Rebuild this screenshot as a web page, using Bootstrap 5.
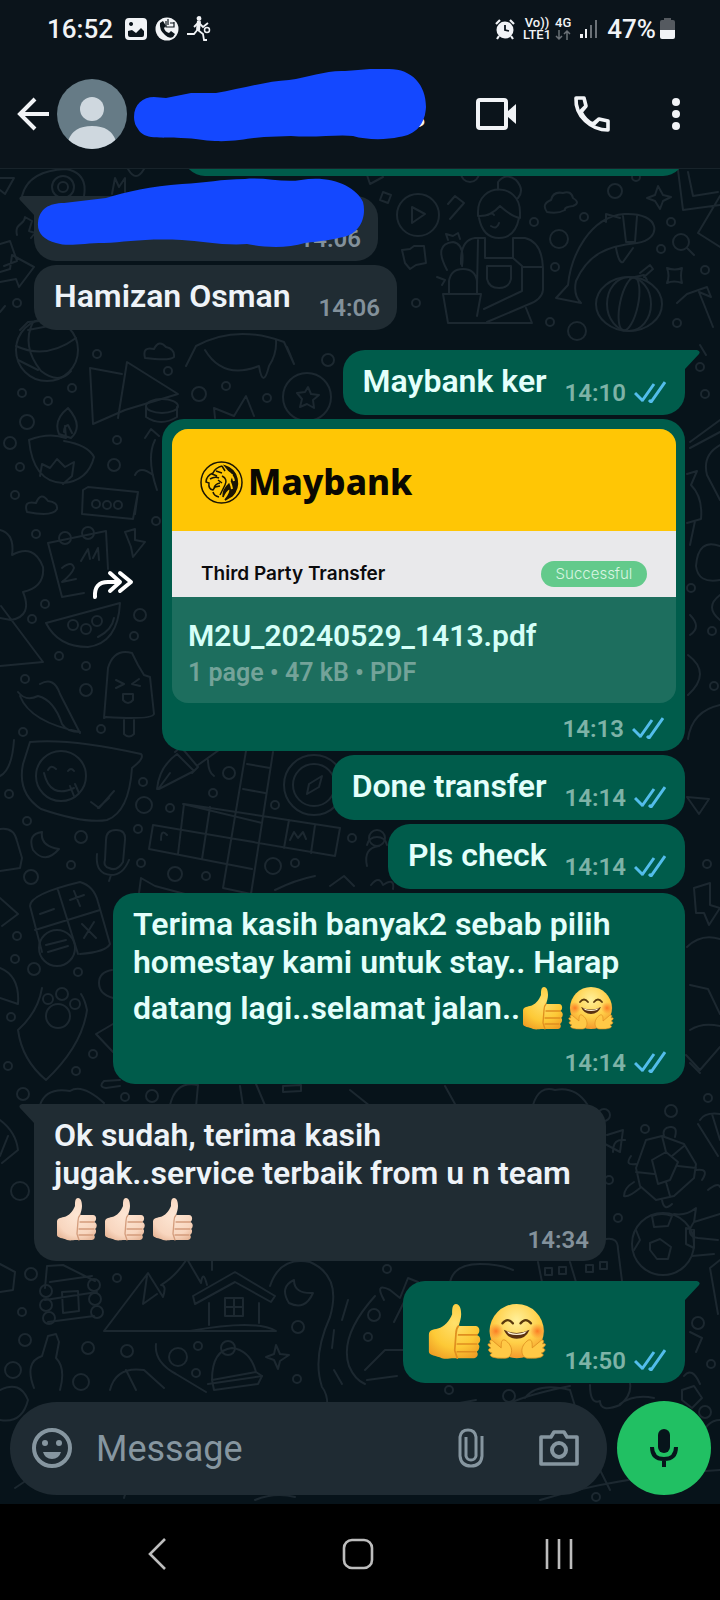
<!DOCTYPE html>
<html lang="ms">
<head>
<meta charset="utf-8">
<meta name="viewport" content="width=device-width, initial-scale=1">
<title>Chat</title>
<link href="https://cdn.jsdelivr.net/npm/bootstrap@5.3.0/dist/css/bootstrap.min.css" rel="stylesheet">
<style>
  body { font-family: Roboto, "Liberation Sans", sans-serif; background: #000; color: #e9edef; }
  svg { display: block; flex: none; }
  .plain { border: 0; background: none; padding: 0; color: inherit; }
  .top-area { background: #0b141b; border-bottom: 1px solid #18232a; color: #f1f3f6; }
  .status-bar { height: 58px; padding: 0 45px 0 47px; font-weight: 500; }
  .status-time { font-size: 26px; line-height: 32px; }
  .status-small { font-size: 13px; line-height: 12px; }
  .app-bar { height: 110px; padding: 2px 32px 0 16px; }
  .app-actions { gap: 54px; }
  .contact-name { height: 70px; margin-left: 6px; font-size: 32px; font-weight: 700; }
  .name-end { margin-left: 276px; padding-top: 4px; }
  .scribble { position: absolute; fill: #1448ff; }
  .scribble-name { left: 0; top: -10px; }
  .scribble-msg { left: 3px; top: -19px; }
  .chat { background: #07131a; }
  .wallpaper { position: absolute; inset: 0; width: 100%; height: 100%; fill: none; stroke: #1c2830; stroke-width: 2; stroke-linejoin: round; stroke-linecap: round; }
  .thread { padding: 0 35px 0 34px; gap: 4px; }
  .turn { margin-top: 16px; }
  .bubble { position: relative; border-radius: 22px; padding: 12px 17px 8px 20px; width: fit-content; max-width: 572px; }
  .bubble-out { background: #005c4b; color: #e4fffb; margin-left: auto; padding-right: 19px; }
  .bubble-in { background: #202c33; color: #eef3f8; }
  .tail-out { border-top-right-radius: 0; }
  .tail-in { border-top-left-radius: 0; }
  .tail { position: absolute; top: 0; }
  .tail-out .tail { left: 100%; fill: #005c4b; }
  .tail-in .tail { right: 100%; fill: #202c33; }
  .msg { font-size: 32px; line-height: 38px; font-weight: 600; margin: 0 0 7px; }
  .msg-gap { margin-right: 18px; }
  .msg-gap-in { margin-right: 28px; }
  .stamp { font-size: 24px; line-height: 24px; font-weight: 600; white-space: nowrap; margin-bottom: 2px; }
  .bubble-in .stamp { color: #83919b; }
  .bubble-out .stamp { color: #7eb3a7; }
  .ticks { fill: none; stroke: #53bdeb; stroke-width: 3; margin-left: 8px; }
  .emoji { display: inline-block; width: 48px; height: 50px; vertical-align: -12px; }
  .emoji-big { width: 62px; height: 65px; margin-top: 3px; }
  .emoji-row { margin: 0 16px 14px 2px; }
  .long-note { padding-bottom: 7px; }
  .stacked { padding-bottom: 7px; }
  .stacked > :not(.tail) { grid-area: 1 / 1; }
  .clipped { height: 7px; overflow: hidden; }
  .clipped .bubble { width: 502px; height: 65px; }
  .masked { width: 344px; height: 65px; }
  .doc-bubble { width: 523px; padding: 10px 9px 6px 10px; }
  .doc-card { border-radius: 16px; overflow: hidden; background: #1d6e5e; margin-bottom: 14px; }
  .doc-brand { background: #ffc605; color: #0a0802; height: 102px; padding: 4px 0 0 28px; gap: 5px; font: 800 35px/40px "Noto Sans", "Open Sans", sans-serif; }
  .doc-title { background: #e9e9eb; color: #0b0b0d; height: 66px; padding: 20px 29px 0; font: 600 19px/24px Inter, sans-serif; }
  .doc-state { background: #63ca8b; color: #d9f5e2; border-radius: 13px; width: 106px; font-size: 15px; line-height: 26px; font-weight: 300; }
  .doc-file { height: 106px; padding: 20px 16px 0; }
  .doc-name { font-size: 30px; line-height: 38px; font-weight: 600; color: #d5fff8; }
  .doc-meta { font-size: 25px; line-height: 35px; font-weight: 600; color: #74a399; }
  .forward { margin-right: 28px; color: #fff; }
  .composer { padding: 17px 9px 9px 10px; gap: 10px; }
  .entry { background: #1f2b33; border-radius: 47px; height: 93px; min-width: 0; padding: 0 28px 0 22px; color: #8696a0; }
  .entry input { background: none; border: 0; outline: 0; width: 0; min-width: 0; font-size: 36px; line-height: 42px; color: #e9edef; padding: 2px 0 0 24px; }
  .entry input::placeholder { color: #8696a0; opacity: 1; }
  .attach { margin-right: 55px; }
  .mic { width: 94px; height: 94px; background: #21c063; color: #07141b; }
  .system-nav { height: 96px; padding: 4px 60px 0 56px; color: #bdbdbd; background: #000; }
</style>
</head>
<body class="d-flex flex-column min-vh-100">

<!-- Shared symbols: emoji, ticks and bubble tails -->
<svg width="0" height="0" class="position-absolute" aria-hidden="true">
  <defs>
    <radialGradient id="gold" cx=".5" cy=".35" r=".75"><stop offset="0" stop-color="#ffe06b"/><stop offset=".6" stop-color="#fdc936"/><stop offset="1" stop-color="#ee9a22"/></radialGradient>
    <radialGradient id="pale" cx=".5" cy=".4" r=".75"><stop offset="0" stop-color="#fde6d4"/><stop offset=".65" stop-color="#f8d6bf"/><stop offset="1" stop-color="#e3ad8c"/></radialGradient>
    <radialGradient id="face" cx=".5" cy=".3" r=".7"><stop offset="0" stop-color="#fff09a"/><stop offset=".6" stop-color="#ffcf47"/><stop offset="1" stop-color="#f59a2c"/></radialGradient>
    <radialGradient id="cheek"><stop offset="0" stop-color="#fb6d1e" stop-opacity=".85"/><stop offset="1" stop-color="#fb7d2e" stop-opacity="0"/></radialGradient>
    <g id="hand">
      <path stroke="none" d="M3 30c0-4 3-4 7-5 5-1 9-6 11-11 0-4 0-8 3-8 3 0 4 4 4 8 0 3-1 6-2 9h13c4 0 4 6 1 7 4 1 3 6 1 7 2 1 1 5-1 6 2 2 0 5-2 5H23c-5 0-6 1-10 0-4-2-10-2-10-5z"/>
      <path d="M26 23c-2 2-2 4-2 6l-1 13 2 6M26 30h14M25 37h15M25 43h14" fill="none" stroke-width="1.3" stroke-linecap="round"/>
    </g>
    <symbol id="thumb" viewBox="0 0 48 50"><use href="#hand" fill="url(#gold)" stroke="#e08f1f"/></symbol>
    <symbol id="thumb-light" viewBox="0 0 48 50"><use href="#hand" fill="url(#pale)" stroke="#d39c7c"/></symbol>
    <symbol id="hug" viewBox="0 0 48 50">
      <circle cx="23" cy="27" r="21" fill="url(#face)"/>
      <circle cx="7" cy="27" r="6" fill="url(#cheek)"/><circle cx="39" cy="27" r="6" fill="url(#cheek)"/>
      <path d="M12 21q4-5 8 0M26 21q4-5 8 0" fill="none" stroke="#5a3a0c" stroke-width="1.8" stroke-linecap="round"/>
      <path d="M13 26q10 5 20 0-3 7-10 7t-10-7" fill="#5a3110"/><path d="M15 27q8 4 16 0l-2 2q-6 2-12 0z" fill="#fff3d8"/>
      <g fill="#ffc946" stroke="#db8a1e" stroke-width=".6">
        <path id="palm" d="M14 48c-5 0-7 0-10-1-2-1-2-2 0-3-3-1-4-3-1-4-3-2-3-4 0-3-2-3 0-4 2-2l6 5c0-4 0-7 3-6 3 2 5 5 5 8 0 4-2 6-5 6z"/>
        <use href="#palm" transform="matrix(-1 0 0 1 46 0)"/>
      </g>
    </symbol>
    <symbol id="ticks" viewBox="0 0 32 22"><path d="M1 12l8 8M8 20L20 3M15 19l2 2L31 1"/></symbol>
    <symbol id="tail-r" viewBox="0 0 15 24"><path d="M-1 0H12q4 1 2 4L0 19v5h-1z"/></symbol>
    <symbol id="tail-l" viewBox="0 0 15 24"><path d="M16 0H3q-4 1-2 4l14 15v5h1z"/></symbol>
  </defs>
</svg>

<header class="top-area">
  <div class="status-bar d-flex align-items-center justify-content-between">
    <div class="d-flex align-items-center">
      <span class="status-time me-2">16:52</span>
      <svg class="ms-1 me-2" width="22" height="22" viewBox="0 0 22 22" fill="#f1f3f6"><path fill-rule="evenodd" d="M4 0h14q4 0 4 4v14q0 4-4 4H4q-4 0-4-4V4q0-4 4-4M3 13v4q0 2 2 2h12q2 0 2-2v-4l-3-3-5 5-4-3zM6 4a2 2 0 1 0 .1 0z"/></svg>
      <svg class="me-2" width="24" height="24" viewBox="0 0 24 24"><circle cx="12" cy="12" r="11.500" fill="#f1f3f6"/><path d="M5 6l3-2 3 5-2 2q1 4 5 5l2-2 4 3-2 3q-4 2-8-2-6-5-5-12" fill="#0b141b"/><path d="M11 4v6h8V5M13 8V2M15 6h4" fill="none" stroke="#0b141b" stroke-width="1.200"/></svg>
      <svg width="24" height="26" viewBox="0 0 24 26" fill="none" stroke="#f1f3f6" stroke-width="1.800"><circle cx="12" cy="2.500" r="1.500" fill="#f1f3f6"/><path d="M12 5l-1 9" stroke-width="4"/><path d="M11 14l5 4 1 6h3M11 13l-4 5H0M11 7L7 11M12 7l4 4 5-4" /><circle cx="20" cy="14" r="2.500" stroke-width="1.500"/></svg>
    </div>
    <div class="d-flex align-items-center">
      <svg width="20" height="21" viewBox="0 0 20 21"><circle cx="10" cy="11" r="8.500" fill="#f1f3f6"/><path d="M10 6v5l4 1" fill="none" stroke="#0b141b" stroke-width="1.800"/><path d="M1 5l4-4M19 5l-4-4M4 17l-2 3M16 17l2 3" stroke="#f1f3f6" stroke-width="2.200"/></svg>
      <div class="status-small text-center ms-2">Vo))<br>LTE1</div>
      <div class="status-small ms-1 d-flex flex-column align-items-center"><span>4G</span>
        <svg width="16" height="12" viewBox="0 0 16 12" fill="none" stroke="#6b7177" stroke-width="1.500"><path d="M4 1v9M1 7l3 3 3-3M12 11V2M9 5l3-3 3 3"/></svg></div>
      <svg class="ms-2" width="20" height="20" viewBox="0 0 20 20" fill="#6b7177"><path fill="#f1f3f6" d="M1 15h3v4H1zM6 10h2v9H6z"/><path d="M11 6h2v13h-2zM16 1h2v18h-2z"/></svg>
      <span class="status-time ms-2">47%</span>
      <svg class="ms-1" width="15" height="22" viewBox="0 0 15 22"><path d="M4 0h7v2h2q2 0 2 2v9H0V4q0-2 2-2h2z" fill="#555a60"/><path d="M0 12h15v7q0 2-2 2H2q-2 0-2-2z" fill="#f1f3f6"/></svg>
    </div>
  </div>
  <div class="app-bar d-flex align-items-center">
    <button class="plain" type="button" aria-label="Back"><svg width="33" height="34" viewBox="0 0 33 34" fill="none" stroke="currentColor" stroke-width="4"><path d="M33 17H4M19 2L4 17l15 15"/></svg></button>
    <svg class="ms-2" width="70" height="70" viewBox="0 0 70 70"><defs><clipPath id="disc"><circle cx="35" cy="35" r="35"/></clipPath></defs><g clip-path="url(#disc)"><path fill="#667b86" d="M0 0h70v70H0z"/><circle cx="35" cy="30" r="12" fill="#cfd8df"/><path d="M11 62q5-15 24-15t24 15v8H11z" fill="#cfd8df"/></g></svg>
    <div class="contact-name flex-grow-1 position-relative d-flex align-items-center">
      <span class="name-end">s</span>
      <svg class="scribble scribble-name" width="294" height="74" viewBox="132 68 294 74" aria-hidden="true"><path d="M133 116C133 103 142 96 153 96L165 97L190 92H215C239 88 266 80 288 79C308 76 326 69 344 70C360 69 370 67 388 68C411 68 425 84 425 106C424 123 415 134 398 136C385 139 365 139 352 135C337 133 315 137 290 135L263 136C247 137 233 141 214 140C202 140 196 137 180 137C159 136 143 139 137 128Q133 123 133 116Z"/></svg>
    </div>
    <div class="app-actions d-flex align-items-center">
      <button class="plain" type="button" aria-label="Video call"><svg width="40" height="34" viewBox="0 0 40 34"><rect x="2" y="3" width="28" height="28" rx="2" fill="none" stroke="currentColor" stroke-width="4"/><path d="M31 15l9-8v20l-9-8z" fill="currentColor"/></svg></button>
      <button class="plain" type="button" aria-label="Voice call"><svg width="40" height="40" viewBox="0 0 40 40" fill="none" stroke="currentColor" stroke-width="3.600" stroke-linejoin="round"><path d="M6 4h8l2 8-5 6c3 6 7 10 12 12l6-5 9 2v9C21 36 5 22 6 4zM11 17l5-5M24 30l5-5"/></svg></button>
      <button class="plain" type="button" aria-label="More options"><svg width="24" height="34" viewBox="0 0 24 34" fill="currentColor"><circle cx="12" cy="5" r="4"/><circle cx="12" cy="17" r="4"/><circle cx="12" cy="29" r="4"/></svg></button>
    </div>
  </div>
</header>

<main class="chat position-relative flex-grow-1 d-flex flex-column overflow-hidden">
  <svg class="wallpaper" viewBox="0 169 720 1335" preserveAspectRatio="xMidYMin slice" aria-hidden="true">
    <!-- upper left -->
    <path d="M0 178l14 0-9 16-5-4M22 196c4-16 18-26 44-27q22 4 18 27M128 169q8 14 16 0M112 194l3-16 4 9 6-9 0 14M17 235c-3-12 8-10 8-18l7 4-3 10 6 2-4 5M0 244l10-3 7 20-13 5M0 272l10-3 2-14 22 12-15 20-3-8-16 3M0 312l5-6M20 330l8-8 24-2"/>
    <circle cx="63" cy="187" r="11"/><circle cx="63" cy="187" r="5"/><circle cx="17" cy="303" r="4"/>
    <!-- gardener, fish and lantern -->
    <circle cx="418" cy="215" r="21"/><path d="M412 207v16l13-9zM367 175l3 9 13-7M415 172q4-7 12 0 4 5 11 1M448 204l7-8 9 7-14 16M383 192l8 3-3 8-8-3z"/>
    <path d="M478 212c0-30 42-30 42 0v6q-8-1-20-12-10 11-22 10zM479 218q4 20 20 20t20-20M498 190v-8q8-10 18-2 9 10 2 18M488 215q4-3 6 0M491 226q6 4 8-3M485 238H475q-15 2-14 26M485 238v20h28v-20h12q17 4 18 30v22q-1 10-16 15l-40 17M478 240l-1 48M513 258l9 8v25l-38 18M487 266h24v13q-2 9-12 9t-12-9zM522 267h21M443 294h38l-4 22M443 294l5 29h84l-6-15M449 293v-12q2-12 14-12t14 12v12M447 270q-14-26 6-28 12 2 9 24M448 240l-2-6 7 2 5-3 2 6M437 277l8 3-3 5"/>
    <path d="M556 298l12-13c3-30 22-68 56-71 38-2 38 26 13 29-30 3-49 11-61 38q-3 14 5 22zM606 222l0-8 14 4M623 216l3 26 9 0 2-26M616 248q3 16 7 14l10-14"/>
    <ellipse cx="629" cy="304" rx="33" ry="27"/><ellipse cx="629" cy="304" rx="22" ry="27"/><ellipse cx="629" cy="304" rx="9" ry="27" transform="rotate(12 629 304)"/><path d="M630 278l14-3 3 5M640 273l10-8 3 4-9 8"/>
    <path d="M547 212q-6-8 4-12 2-9 12-7 8-3 10 5 8 5 0 8-9 1-8 4-7 4-18 2zM658 186l5 9 8 2-8 4-3 8-5-8-8-3 8-3zM667 268q8 3 15 0-2 8 0 15-8-3-15 0 3-7 0-15M402 250l8-1 4-3 10 0 2 17-10 2-6 4-5-6zM678 170l5 40 37-5M688 172l5 24 25-4M720 196l-22 37 22 14M677 303l10-9 20-7 4 10-12-5 14 35"/><circle cx="681" cy="242" r="8"/><path d="M687 248l7 7"/>
    <!-- left middle -->
    <circle cx="47" cy="350" r="31"/><path d="M33 322q-12 24 8 49 18 14 30 0M18 360l20 10M28 330l42-8M16 346q30 14 60-8M90 368l3 56 32-14 53-16-51-32-9 56M90 368l32 6"/>
    <path d="M145 358q-3-12 9-9 5-10 12-2 9 2 8 10-4 4-29 1zM186 366l10-20q40-22 88-4l10 22-7-17M205 350q18 30 54 16 4 24 10 0 8-12 7-26"/><ellipse cx="162" cy="406" rx="16" ry="7"/><path d="M146 407v10q15 10 31 0v-10"/>
    <circle cx="307" cy="397" r="24"/><path d="M308 387l3 7 8 1-6 5 1 8-7-4-7 3 2-8-5-6 8-1zM215 418l-1-10 20 8 12-20 8 20"/>
    <path d="M29 440q20-8 37-2l-1-12M29 440q4 42 34 43 25-2 31-26-6-12-30-16M40 476l2-12 8 4 7-9 8 8 9-5-2 14-9 8M59 434q-6-14 9-26 16 18 3 30zM64 432q0-6 4-7l4 8M83 490l5-3 50 5-5 27-51-5zM138 492l-3 22M27 512q-4-12 9-9 5-12 12-2 10 1 9 8-4 8-30 3zM145 438l6-9 8 7M135 475q5-10 18 0M155 440q-9 18 2 50"/>
    <circle cx="96" cy="504" r="4"/><circle cx="107" cy="505" r="4"/><circle cx="118" cy="505" r="4"/>
    <path d="M48 543l58-12 2 38M48 543l14 54 22-4M62 568q10-8 12 0-2 6-12 14l14-3M81 561l7-12 2 10M93 558l5-10 1 12M125 532l10-3 0 11 10 2-12 15-2-10zM46 623l74-20q-2 40-32 44-30 0-42-24M114 618q-2 12-16 19M0 530q15 4 12 25 22-12 31 12 2 20-20 25 10 24-12 28l-11-2M0 666l43-4-42-56M104 718l4-50q6-20 24-15l6 12 6 10 6 2 4 37q-2 6-48 3zM124 720v14q5 5 10 0v-14M116 680l8 4-8 4M139 679l-7 5 8 2M123 694h10v6q-5 6-10 0zM18 692q8 10 20 4 16 4 24 28 5 8 18 8M40 684q14-8 20 10l20 39M20 696q10 26 60 36"/>
    <circle cx="65" cy="538" r="6"/><circle cx="88" cy="533" r="6"/><circle cx="73" cy="625" r="5"/><circle cx="86" cy="629" r="5"/><circle cx="97" cy="621" r="5"/>
    <!-- speech, pen, crossword, compass -->
    <path d="M30 742q40-4 111 12 4 4-9 14-3 44-25 52-22 4-66-11-24-16-18-45zM0 776q12-6 14-36M91 802l8 6 15-17M98 808l11-10"/><circle cx="61" cy="776" r="25"/><path d="M44 773q6 26 30 15M48 770q3-6 8-1M68 771q3-4 6 0M70 786l4 10M75 784l4 9"/>
    <path d="M157 789q2-22 20-35l17 17-35 18zM159 788l11-15M175 752l6-5 17 20-6 6M198 765l28-20M208 760q0 12 6 16"/>
    <path d="M247 745l-24 143 28 6 22-142M183 804l79 19M153 825l182 31 5-28-156-24-6 50M153 825l-4 24 103 20M210 807l-8 52M289 820l-5 28M315 825l-4 28M243 789l22 4M247 764l23 4M229 838l25 4"/><circle cx="314" cy="785" r="30"/><circle cx="314" cy="785" r="21"/><path d="M307 794l2-10 13-8-3 11zM161 840q0-12 6-5M290 840l4-8 4 6 5-6 3 7"/>
    <path d="M42 832q-2 14 17 17-14 16-26 1-6-16 9-18M0 829q14-2 17 12l5 17-2 10-20 3M106 840q0-10 10-10t9 10l-2 22q-6 10-14 6-6-2-4-8zM97 854q-2 20 14 21 12 0 18-15M111 875l-2 6M30 906q0-12 50-24 14 4 18 20l12 42q-4 8-30 10M30 906l12 46M58 890l20 64M35 930l65-20M70 900l14-5M74 891l6 15M40 914l14-5M82 924l14 14M94 922l-10 16"/><circle cx="57" cy="948" r="18"/><path d="M46 945l20-5M48 952l20-6M139 893l2-15 14 8 30 8M275 890q20-10 40-14M330 886l14-10 10 10M0 898l18 16-16 12M0 968q20 8 18 36l-18-6M42 988q-4 24-24 42 4 30 28 50 36-34 41-70-2-10-6-16"/>
    <circle cx="58" cy="1016" r="12"/><circle cx="48" cy="999" r="5"/><circle cx="62" cy="994" r="6"/><circle cx="75" cy="1004" r="5"/><path d="M113 1024l-17 10 17 18M112 970q-13 2-13 13t14 15M120 1080l-16 1q-6 6 2 7l14-2"/>
    <!-- right margin -->
    <path d="M700 345l6 10M690 442l30-22M690 448l30-16M687 474l10-3-6 14q12 12 10 34l-14 4M690 545l5-24M690 615q12 12 0 20M688 655q24 18 0 40M720 546q-22-8-24 20 2 18 24 14M720 595q-16 12 0 25M720 705q-28 6-32 34M720 445q-18 10-13 30l13 25M687 797l22 2-10 15zM694 888l16-5 0 22 10 3-11 17-5-12h-8zM687 947q14-14 33-8M690 985l18 4 12 25M690 1030q12-8 30-4M686 1055l14 15 20-23M690 1063l10 10"/>
    <path d="M367 845q2-8 10-8t10 8M367 866q-4-18 12-20M371 885q8-10 12 0 12-8 10 4"/><circle cx="377" cy="838" r="8"/>
    <!-- bottom band -->
    <path d="M40 1105q6-18 30-14 12-8 34 12M170 1105q6-25 28-20l-2 22M240 1086l3 20M256 1084l11 26M0 1120q16 12 18 30l-16 13M8 1136l-8 20M283 1092l0-6 18-1v6zM350 1090l20 16M445 1086l10 18M533 1105q6-20 22-15 20-4 32 14"/>
    <path d="M45 1288l2-22 16-1 32 16M50 1282l42-6M45 1300l52-8M48 1322l46-6M62 1292l16-1 1 20-16 2zM104 1331l44-58 15 24q4-12-2-12 14-8 26-26l14 24q2-14 6 2M147 1276l-4 28 14-10M104 1331h172q-20-12-86 0M193 1296l42-24 40 24-4 6-36-20-40 22zM209 1303v22M259 1303v20M225 1298h18v18h-18zM234 1298v18M225 1307h18M212 1270v-10h12"/>
    <circle cx="46" cy="1291" r="6"/><circle cx="46" cy="1305" r="6"/><circle cx="49" cy="1318" r="6"/><circle cx="94" cy="1285" r="6"/><circle cx="95" cy="1299" r="6"/><circle cx="97" cy="1312" r="6"/>
    <path d="M294 1280q0 14 19 13-8 18-24 10-10-16 5-23M270 1286q10-30 40-24 32 14 20 55-18 40-8 70 8 10 4 30M375 1296q-36 40-26 70 6 14 16 18M348 1300l-6 20M334 1330l-2 18M334 1370l8 14M0 1264l15 8-2 18-13 2M34 1388q-10-26 8-32l6-20 8-2 3 8-3 16q10 10 4 32M156 1344q-2 18 20 30l30 18M110 1390q6-24 34-20l20 18M126 1370l10 20M212 1380q0-30 20-32 18 2 24 24l6 4-4 8-44 6zM212 1380l44-8M276 1345l4 9 9 1-9 6-2 8-4-9-8-3 8-3z"/><circle cx="228" cy="1348" r="7"/>
    <path d="M607 1135l16-5-3 22-15-8M613 1152q0-14 12-12M700 1120q5-8 20-6M698 1124l20 32M712 1114l8 26M708 1190q10-8 12-3M538 1262l4 20M570 1262l6 20M606 1239q12-2 12 10l4 32M545 1268h7v7h-7zM559 1267h7v7h-7zM586 1265h7v7h-7zM600 1262h7v7h-7z"/>
    <path d="M646 1140l16-4 22 8 12 20-2 14-20 18-18 4-16-14-4-18zM652 1160l14-8 12 10-8 18-12 4zM662 1136l4 16M684 1146l-12 10M696 1168l-18-2M670 1196l-4-14M636 1172l18 2M664 1136q-2-8 6-9t5 10M636 1164q-12 2-5-8M696 1170q14-2 6 10M640 1188q-12 10-16 8 0-8 10-14M662 1200q2 12 10 4"/>
    <circle cx="663" cy="1244" r="31"/><path d="M650 1243l10-4 11 8-3 12h-11l-7-9zM652 1216q10-4 20 0l-4 10-14 1zM686 1228l8 2v18l-8-4zM636 1230l4 10-6 10M674 1214q12 2 22-6l-2 14 26-8M694 1222q-10 14 4 16l20 2M692 1256l22-2"/>
    <path d="M450 1282q4-18 30-18 20 0 33 6M384 1300q-10-18 6-10l10 8 8-20 10 4-14 20-10 20M365 1370l20-20h20M367 1380l30-4M720 1260l-10 8 8 46M690 1332l12 6-6 14M684 1376q8-10 16 8M500 1408q20-12 70-22M476 1400l-22 4M525 1398q12-16 45-8l8 26M590 1385q0 20 10 16 0 12 20 4 12-10 10-22M620 1404q14-10 34-6M682 1390l12-4 8 12-10 10-10-8zM610 1490l-10-20M540 1500q80-24 180-30M0 1390q20-10 28 10-6 24-28 20M15 1488l12-8 4-8 4 9M124 1498q2-10 12-6M255 1500q20-8 40-3M700 1440q6-20 20-20M208 1384l54-8"/>
    <!-- scattered bubbles -->
    <circle cx="615" cy="191" r="7"/><circle cx="636" cy="177" r="4"/><circle cx="534" cy="222" r="4"/><circle cx="559" cy="239" r="9"/><circle cx="584" cy="217" r="4"/><circle cx="671" cy="222" r="4"/><circle cx="661" cy="249" r="4"/><circle cx="555" cy="267" r="4"/><circle cx="705" cy="270" r="4"/><circle cx="416" cy="303" r="4"/><circle cx="550" cy="322" r="4"/><circle cx="577" cy="331" r="9"/><circle cx="677" cy="323" r="4"/><circle cx="470" cy="173" r="9"/>
    <circle cx="97" cy="354" r="4"/><circle cx="22" cy="393" r="4"/><circle cx="48" cy="401" r="4"/><circle cx="72" cy="388" r="4"/><circle cx="27" cy="422" r="7"/><circle cx="10" cy="443" r="6"/><circle cx="117" cy="440" r="4"/><circle cx="20" cy="467" r="4"/><circle cx="114" cy="465" r="6"/><circle cx="15" cy="495" r="4"/><circle cx="168" cy="371" r="4"/><circle cx="199" cy="394" r="7"/><circle cx="226" cy="386" r="4"/><circle cx="267" cy="398" r="4"/><circle cx="328" cy="360" r="6"/><circle cx="156" cy="521" r="4"/><circle cx="36" cy="534" r="4"/><circle cx="45" cy="604" r="4"/><circle cx="32" cy="619" r="4"/><circle cx="140" cy="615" r="6"/><circle cx="134" cy="636" r="4"/><circle cx="59" cy="656" r="4"/><circle cx="86" cy="666" r="4"/><circle cx="25" cy="679" r="4"/><circle cx="86" cy="690" r="6"/><circle cx="101" cy="729" r="4"/><circle cx="23" cy="732" r="4"/>
    <circle cx="143" cy="782" r="4"/><circle cx="144" cy="805" r="8"/><circle cx="170" cy="808" r="4"/><circle cx="213" cy="793" r="4"/><circle cx="229" cy="773" r="6"/><circle cx="275" cy="805" r="4"/><circle cx="81" cy="837" r="6"/><circle cx="27" cy="821" r="4"/><circle cx="9" cy="794" r="4"/><circle cx="31" cy="877" r="7"/><circle cx="71" cy="865" r="4"/><circle cx="138" cy="829" r="4"/><circle cx="141" cy="863" r="4"/><circle cx="175" cy="874" r="7"/><circle cx="206" cy="876" r="4"/><circle cx="273" cy="866" r="8"/><circle cx="295" cy="863" r="4"/><circle cx="352" cy="838" r="4"/><circle cx="17" cy="936" r="4"/><circle cx="15" cy="959" r="4"/><circle cx="34" cy="969" r="6"/><circle cx="78" cy="972" r="4"/><circle cx="11" cy="1017" r="4"/><circle cx="93" cy="1054" r="4"/><circle cx="8" cy="1066" r="4"/><circle cx="76" cy="1071" r="4"/><circle cx="23" cy="1094" r="6"/>
    <circle cx="700" cy="367" r="4"/><circle cx="705" cy="394" r="4"/><circle cx="691" cy="588" r="4"/><circle cx="712" cy="631" r="4"/><circle cx="714" cy="686" r="4"/><circle cx="707" cy="864" r="4"/><circle cx="708" cy="1098" r="4"/><circle cx="125" cy="1097" r="4"/><circle cx="152" cy="1096" r="6"/><circle cx="671" cy="1111" r="6"/><circle cx="645" cy="1129" r="4"/><circle cx="604" cy="1115" r="6"/><circle cx="20" cy="1191" r="9"/><circle cx="609" cy="1180" r="4"/><circle cx="618" cy="1218" r="4"/><circle cx="387" cy="1269" r="4"/><circle cx="31" cy="1274" r="6"/><circle cx="117" cy="1278" r="4"/><circle cx="22" cy="1312" r="4"/><circle cx="25" cy="1340" r="6"/><circle cx="88" cy="1348" r="6"/><circle cx="127" cy="1351" r="6"/><circle cx="178" cy="1357" r="9"/><circle cx="198" cy="1346" r="4"/><circle cx="196" cy="1373" r="4"/><circle cx="298" cy="1327" r="6"/><circle cx="297" cy="1379" r="4"/><circle cx="13" cy="1370" r="8"/><circle cx="81" cy="1382" r="8"/><circle cx="374" cy="1315" r="6"/><circle cx="368" cy="1337" r="4"/><circle cx="698" cy="1323" r="6"/><circle cx="711" cy="1364" r="4"/><circle cx="509" cy="1396" r="6"/><circle cx="449" cy="1390" r="4"/><circle cx="705" cy="1412" r="6"/><circle cx="596" cy="1497" r="4"/>
  </svg>

  <div class="thread position-relative d-flex flex-column flex-grow-1">
    <div class="clipped d-flex align-items-end"><div class="bubble bubble-out"></div></div>

    <div class="bubble bubble-in tail-in turn masked d-flex align-items-end justify-content-end">
      <svg class="tail" width="15" height="24"><use href="#tail-l"/></svg>
      <span class="stamp">14:06</span>
      <svg class="scribble scribble-msg" width="330" height="72" viewBox="36 176 330 72" aria-hidden="true"><path d="M37 222C38 208 48 202 63 202L105 197C125 191 150 185 181 183C205 182 220 178 244 178C264 176 282 182 300 179C331 174 355 186 362 201C366 217 358 233 342 236C330 239 320 240 304 242C285 248 260 246 246 243C225 245 199 240 181 239C145 237 125 241 103 242C82 242 67 246 55 242C43 239 36 232 37 222Z"/></svg>
    </div>

    <div class="bubble bubble-in d-flex align-items-end">
      <p class="msg msg-gap-in">Hamizan Osman</p>
      <span class="stamp">14:06</span>
    </div>

    <div class="bubble bubble-out tail-out turn d-flex align-items-end">
      <svg class="tail" width="15" height="24"><use href="#tail-r"/></svg>
      <p class="msg msg-gap">Maybank ker</p>
      <span class="stamp d-flex">14:10<svg class="ticks" width="32" height="22"><use href="#ticks"/></svg></span>
    </div>

    <div class="d-flex align-items-center justify-content-end">
      <button class="plain forward" type="button" aria-label="Forward"><svg width="42" height="30" viewBox="0 0 42 30" fill="none" stroke="currentColor" stroke-width="4" stroke-linecap="round" stroke-linejoin="round"><path d="M3 27q-1-15 13-15h11M18 3l10 9-10 9M28 3l11 9-11 9"/></svg></button>
      <div class="bubble bubble-out doc-bubble m-0">
        <div class="doc-card">
          <div class="doc-brand d-flex align-items-center">
            <svg width="43" height="43" viewBox="0 0 43 43" fill="none" stroke="#1b1503" stroke-width="1.500"><circle cx="21.500" cy="21.500" r="20.500"/><path d="M22 5q-7 2-9 7-7 3-7 9l3 1q-1 6 4 7l2-3 5-1M12 13l5 2M10 18q5-3 9-1M16 10l6 2M20 22q-5 1-6 5M22 15q6 3 3 9t-5 10M13 31q1 4 6 5M22 5l3 5M18 19l4 3"/><path d="M25 5q10 3 12 13t-5 17l-7 4q6-7 5-12-5 3-7 9 0-8 6-13t1-12z" fill="#1b1503"/><path d="M28 11q5 3 6 9M27 17q4 4 5 11M32 13l-3 8" stroke="#ffc605" stroke-width="2"/></svg>
            <span>Maybank</span>
          </div>
          <div class="doc-title d-flex align-items-center justify-content-between">
            <span>Third Party Transfer</span><span class="doc-state text-center">Successful</span>
          </div>
          <div class="doc-file">
            <div class="doc-name">M2U_20240529_1413.pdf</div>
            <div class="doc-meta">1 page • 47 kB • PDF</div>
          </div>
        </div>
        <span class="stamp d-flex justify-content-end pe-2 mb-1">14:13<svg class="ticks me-1" width="32" height="22"><use href="#ticks"/></svg></span>
      </div>
    </div>

    <div class="bubble bubble-out d-flex align-items-end">
      <p class="msg msg-gap">Done transfer</p>
      <span class="stamp d-flex">14:14<svg class="ticks" width="32" height="22"><use href="#ticks"/></svg></span>
    </div>

    <div class="bubble bubble-out d-flex align-items-end">
      <p class="msg msg-gap">Pls check</p>
      <span class="stamp d-flex">14:14<svg class="ticks" width="32" height="22"><use href="#ticks"/></svg></span>
    </div>

    <div class="bubble bubble-out long-note w-100">
      <p class="msg mb-3">Terima kasih banyak2 sebab pilih<br>homestay kami untuk stay.. Harap<br>datang lagi..selamat jalan..<svg class="emoji" role="img" aria-label="👍"><use href="#thumb"/></svg><svg class="emoji" role="img" aria-label="🤗"><use href="#hug"/></svg></p>
      <span class="stamp d-flex justify-content-end pt-1">14:14<svg class="ticks" width="32" height="22"><use href="#ticks"/></svg></span>
    </div>

    <div class="bubble bubble-in tail-in turn stacked d-grid w-100">
      <svg class="tail" width="15" height="24"><use href="#tail-l"/></svg>
      <p class="msg mb-2 pb-1">Ok sudah, terima kasih<br>jugak..service terbaik from u n team<br><svg class="emoji" role="img" aria-label="👍🏻"><use href="#thumb-light"/></svg><svg class="emoji" role="img" aria-label="👍🏻"><use href="#thumb-light"/></svg><svg class="emoji" role="img" aria-label="👍🏻"><use href="#thumb-light"/></svg></p>
      <span class="stamp align-self-end ms-auto">14:34</span>
    </div>

    <div class="bubble bubble-out tail-out turn d-flex align-items-end">
      <svg class="tail" width="15" height="24"><use href="#tail-r"/></svg>
      <div class="emoji-row d-flex"><svg class="emoji emoji-big" role="img" aria-label="👍"><use href="#thumb"/></svg><svg class="emoji emoji-big" role="img" aria-label="🤗"><use href="#hug"/></svg></div>
      <span class="stamp d-flex">14:50<svg class="ticks" width="32" height="22"><use href="#ticks"/></svg></span>
    </div>
  </div>

  <form class="composer position-relative d-flex align-items-center" onsubmit="return false">
    <div class="entry d-flex align-items-center flex-grow-1">
      <button class="plain" type="button" aria-label="Emoji"><svg width="40" height="40" viewBox="0 0 40 40" fill="currentColor"><circle cx="20" cy="20" r="18" fill="none" stroke="currentColor" stroke-width="4"/><circle cx="13" cy="15" r="3"/><circle cx="27" cy="15" r="3"/><path d="M11 24h18q-2 7-9 7t-9-7"/></svg></button>
      <input class="flex-grow-1" type="text" placeholder="Message" aria-label="Message">
      <button class="plain attach" type="button" aria-label="Attach"><svg width="26" height="40" viewBox="0 0 26 40" fill="none" stroke="currentColor" stroke-width="3"><path d="M24 8v20q-1 10-11 10T2 28V9q1-7 8-7t8 7v19q-1 4-5 4t-5-4V9"/></svg></button>
      <button class="plain" type="button" aria-label="Camera"><svg width="40" height="36" viewBox="0 0 40 36" fill="none" stroke="currentColor" stroke-width="4"><path d="M2 7h10l3-5h10l3 5h10v27H2z" stroke-linejoin="round" stroke-width="3.600"/><circle cx="20" cy="20" r="7"/></svg></button>
    </div>
    <button class="plain mic rounded-circle d-flex align-items-center justify-content-center flex-shrink-0" type="button" aria-label="Record voice message"><svg width="28" height="40" viewBox="0 0 28 40"><rect x="8" y="1" width="12" height="24" rx="6" fill="currentColor"/><path d="M2 19q0 12 12 12t12-12M14 31v8" fill="none" stroke="currentColor" stroke-width="4"/></svg></button>
  </form>
</main>

<nav class="system-nav row g-0 align-items-center" aria-label="System navigation">
  <div class="col d-flex justify-content-center"><button class="plain" type="button" aria-label="System back"><svg width="20" height="34" viewBox="0 0 20 34" fill="none" stroke="currentColor" stroke-width="2.600"><path d="M18 2L3 17l15 15"/></svg></button></div>
  <div class="col d-flex justify-content-center"><button class="plain" type="button" aria-label="Home"><svg width="32" height="34" viewBox="0 0 32 34" fill="none" stroke="currentColor" stroke-width="2.600"><rect x="2" y="3" width="28" height="28" rx="8"/></svg></button></div>
  <div class="col d-flex justify-content-center"><button class="plain" type="button" aria-label="Recent apps"><svg width="28" height="34" viewBox="0 0 28 34" stroke="currentColor" stroke-width="2.600"><path d="M2 2v30M14 2v30M26 2v30"/></svg></button></div>
</nav>
<script src="https://cdn.jsdelivr.net/npm/bootstrap@5.3.0/dist/js/bootstrap.bundle.min.js"></script>
</body>
</html>
